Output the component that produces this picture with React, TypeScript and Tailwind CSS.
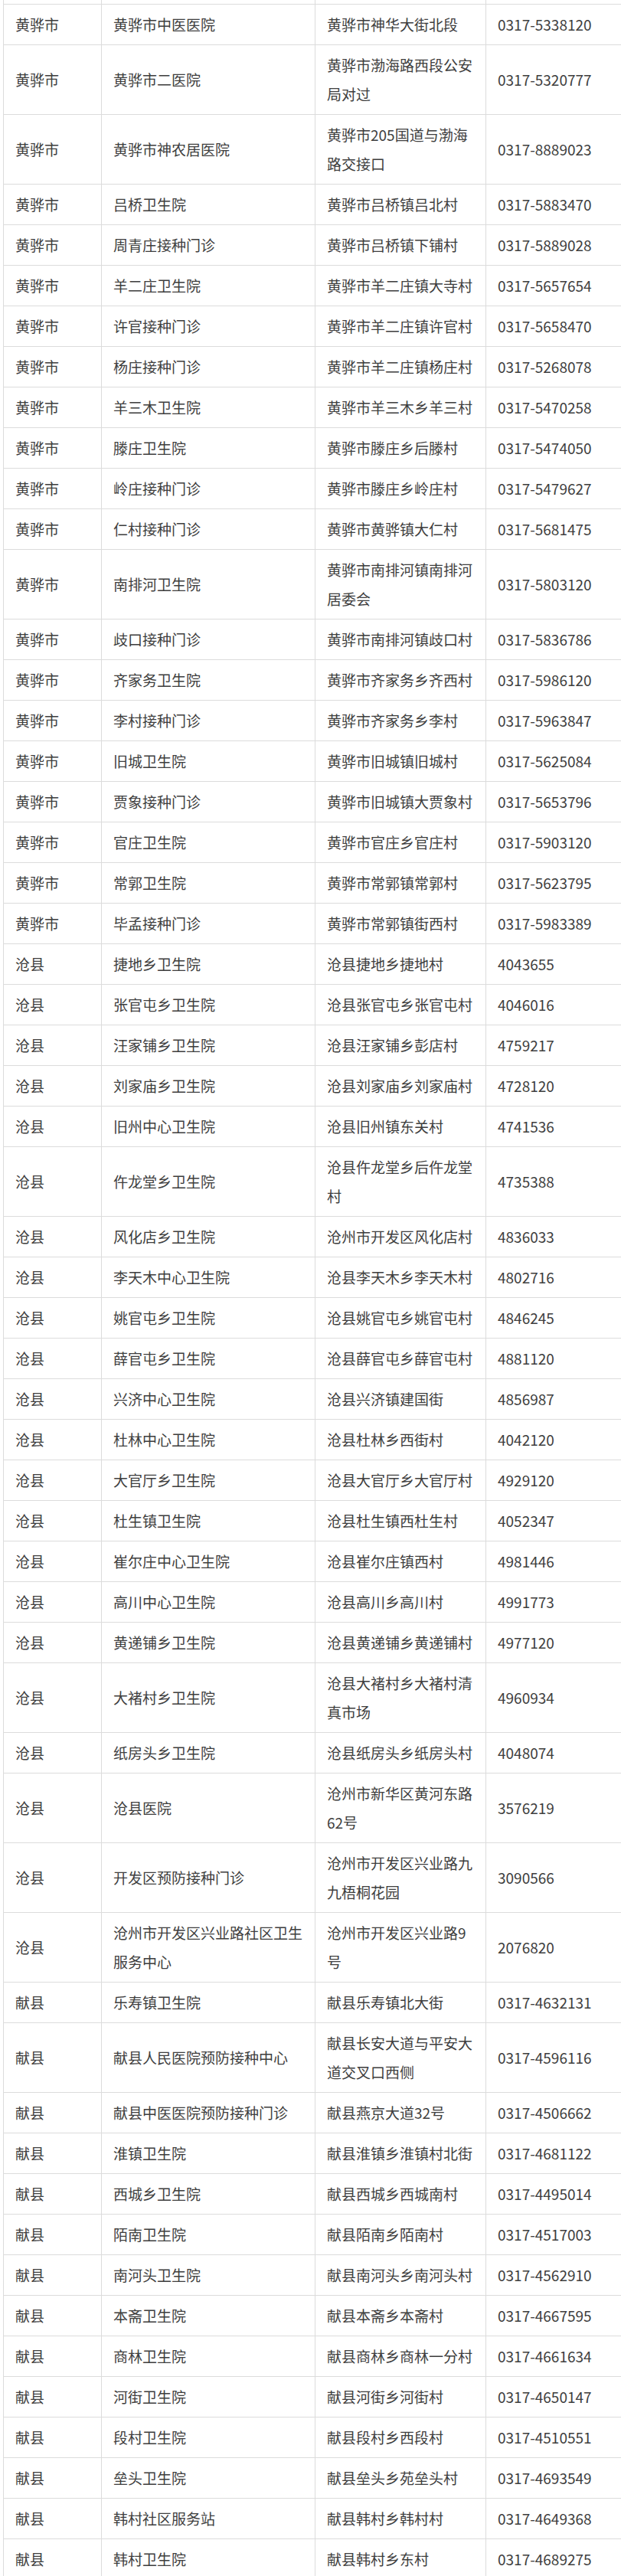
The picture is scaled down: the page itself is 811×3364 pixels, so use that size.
type Row = [string, string, string, string]

const rows: Row[] = [
  ["黄骅市", "黄骅市中医医院", "黄骅市神华大街北段", "0317-5338120"],
  ["黄骅市", "黄骅市二医院", "黄骅市渤海路西段公安局对过", "0317-5320777"],
  ["黄骅市", "黄骅市神农居医院", "黄骅市205国道与渤海路交接口", "0317-8889023"],
  ["黄骅市", "吕桥卫生院", "黄骅市吕桥镇吕北村", "0317-5883470"],
  ["黄骅市", "周青庄接种门诊", "黄骅市吕桥镇下铺村", "0317-5889028"],
  ["黄骅市", "羊二庄卫生院", "黄骅市羊二庄镇大寺村", "0317-5657654"],
  ["黄骅市", "许官接种门诊", "黄骅市羊二庄镇许官村", "0317-5658470"],
  ["黄骅市", "杨庄接种门诊", "黄骅市羊二庄镇杨庄村", "0317-5268078"],
  ["黄骅市", "羊三木卫生院", "黄骅市羊三木乡羊三村", "0317-5470258"],
  ["黄骅市", "滕庄卫生院", "黄骅市滕庄乡后滕村", "0317-5474050"],
  ["黄骅市", "岭庄接种门诊", "黄骅市滕庄乡岭庄村", "0317-5479627"],
  ["黄骅市", "仁村接种门诊", "黄骅市黄骅镇大仁村", "0317-5681475"],
  ["黄骅市", "南排河卫生院", "黄骅市南排河镇南排河居委会", "0317-5803120"],
  ["黄骅市", "歧口接种门诊", "黄骅市南排河镇歧口村", "0317-5836786"],
  ["黄骅市", "齐家务卫生院", "黄骅市齐家务乡齐西村", "0317-5986120"],
  ["黄骅市", "李村接种门诊", "黄骅市齐家务乡李村", "0317-5963847"],
  ["黄骅市", "旧城卫生院", "黄骅市旧城镇旧城村", "0317-5625084"],
  ["黄骅市", "贾象接种门诊", "黄骅市旧城镇大贾象村", "0317-5653796"],
  ["黄骅市", "官庄卫生院", "黄骅市官庄乡官庄村", "0317-5903120"],
  ["黄骅市", "常郭卫生院", "黄骅市常郭镇常郭村", "0317-5623795"],
  ["黄骅市", "毕孟接种门诊", "黄骅市常郭镇街西村", "0317-5983389"],
  ["沧县", "捷地乡卫生院", "沧县捷地乡捷地村", "4043655"],
  ["沧县", "张官屯乡卫生院", "沧县张官屯乡张官屯村", "4046016"],
  ["沧县", "汪家铺乡卫生院", "沧县汪家铺乡彭店村", "4759217"],
  ["沧县", "刘家庙乡卫生院", "沧县刘家庙乡刘家庙村", "4728120"],
  ["沧县", "旧州中心卫生院", "沧县旧州镇东关村", "4741536"],
  ["沧县", "仵龙堂乡卫生院", "沧县仵龙堂乡后仵龙堂村", "4735388"],
  ["沧县", "风化店乡卫生院", "沧州市开发区风化店村", "4836033"],
  ["沧县", "李天木中心卫生院", "沧县李天木乡李天木村", "4802716"],
  ["沧县", "姚官屯乡卫生院", "沧县姚官屯乡姚官屯村", "4846245"],
  ["沧县", "薛官屯乡卫生院", "沧县薛官屯乡薛官屯村", "4881120"],
  ["沧县", "兴济中心卫生院", "沧县兴济镇建国街", "4856987"],
  ["沧县", "杜林中心卫生院", "沧县杜林乡西街村", "4042120"],
  ["沧县", "大官厅乡卫生院", "沧县大官厅乡大官厅村", "4929120"],
  ["沧县", "杜生镇卫生院", "沧县杜生镇西杜生村", "4052347"],
  ["沧县", "崔尔庄中心卫生院", "沧县崔尔庄镇西村", "4981446"],
  ["沧县", "高川中心卫生院", "沧县高川乡高川村", "4991773"],
  ["沧县", "黄递铺乡卫生院", "沧县黄递铺乡黄递铺村", "4977120"],
  ["沧县", "大褚村乡卫生院", "沧县大褚村乡大褚村清真市场", "4960934"],
  ["沧县", "纸房头乡卫生院", "沧县纸房头乡纸房头村", "4048074"],
  ["沧县", "沧县医院", "沧州市新华区黄河东路62号", "3576219"],
  ["沧县", "开发区预防接种门诊", "沧州市开发区兴业路九九梧桐花园", "3090566"],
  ["沧县", "沧州市开发区兴业路社区卫生服务中心", "沧州市开发区兴业路9号", "2076820"],
  ["献县", "乐寿镇卫生院", "献县乐寿镇北大街", "0317-4632131"],
  ["献县", "献县人民医院预防接种中心", "献县长安大道与平安大道交叉口西侧", "0317-4596116"],
  ["献县", "献县中医医院预防接种门诊", "献县燕京大道32号", "0317-4506662"],
  ["献县", "淮镇卫生院", "献县淮镇乡淮镇村北街", "0317-4681122"],
  ["献县", "西城乡卫生院", "献县西城乡西城南村", "0317-4495014"],
  ["献县", "陌南卫生院", "献县陌南乡陌南村", "0317-4517003"],
  ["献县", "南河头卫生院", "献县南河头乡南河头村", "0317-4562910"],
  ["献县", "本斋卫生院", "献县本斋乡本斋村", "0317-4667595"],
  ["献县", "商林卫生院", "献县商林乡商林一分村", "0317-4661634"],
  ["献县", "河街卫生院", "献县河街乡河街村", "0317-4650147"],
  ["献县", "段村卫生院", "献县段村乡西段村", "0317-4510551"],
  ["献县", "垒头卫生院", "献县垒头乡苑垒头村", "0317-4693549"],
  ["献县", "韩村社区服务站", "献县韩村乡韩村村", "0317-4649368"],
  ["献县", "韩村卫生院", "献县韩村乡东村", "0317-4689275"],
]

const cell = "border border-[#dcdcdc] py-[7px] pl-[15px] pr-[13px] align-middle"

export default function App() {
  return (
    <div className="min-h-screen bg-white font-['Noto_Sans_CJK_SC','Noto_Sans',sans-serif] text-[19px] leading-[38px] text-[#3e3e3e]">
      <table className="ml-[4px] w-[807px] table-fixed border-collapse">
        <colgroup>
          <col className="w-[128px]" />
          <col className="w-[279px]" />
          <col className="w-[223px]" />
          <col className="w-[177px]" />
        </colgroup>
        <tbody>
          {/* row cut off at the top of the shot */}
          <tr className="h-[5px]">
            <td className="border-x border-[#dcdcdc] p-0" />
            <td className="border-x border-[#dcdcdc] p-0" />
            <td className="border-x border-[#dcdcdc] p-0" />
            <td className="border-x border-[#dcdcdc] p-0" />
          </tr>
          {rows.map((r, i) => (
            <tr key={i}>
              <td className={cell}>{r[0]}</td>
              <td className={cell}>{r[1]}</td>
              <td className={cell}>{r[2]}</td>
              <td className={cell}>{r[3]}</td>
            </tr>
          ))}
        </tbody>
      </table>
    </div>
  )
}
